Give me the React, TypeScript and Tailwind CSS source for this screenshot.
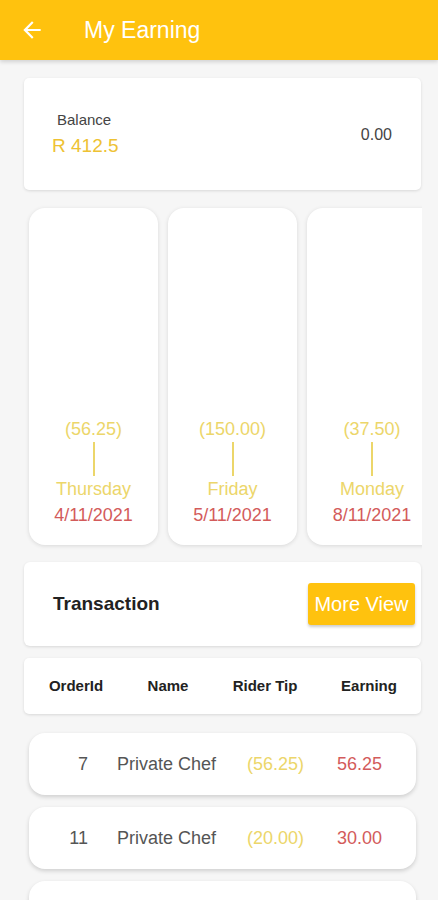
import React from "react";

const days = [
  { amt: "(56.25)", day: "Thursday", date: "4/11/2021" },
  { amt: "(150.00)", day: "Friday", date: "5/11/2021" },
  { amt: "(37.50)", day: "Monday", date: "8/11/2021" },
];

const rows = [
  { id: "7", name: "Private Chef", tip: "(56.25)", earn: "56.25" },
  { id: "11", name: "Private Chef", tip: "(20.00)", earn: "30.00" },
];

export default function App() {
  return (
    <div
      className="w-[438px] h-[900px] overflow-hidden bg-[#f6f6f6]"
      style={{ fontFamily: '"Liberation Sans", Arial, sans-serif' }}
    >
      <div className="h-[60px] bg-[#ffc20e] flex items-center shadow-[0_2px_4px_rgba(0,0,0,0.15)] relative z-10">
        <svg width="26" height="26" viewBox="0 0 24 24" className="ml-[19px]" fill="#ffffff">
          <path d="M20 11H7.83l5.59-5.59L12 4l-8 8 8 8 1.41-1.41L7.83 13H20v-2z" />
        </svg>
        <span className="ml-[39px] text-[23px] text-white leading-none">My Earning</span>
      </div>

      <div className="ml-[24px] mt-[18px] w-[397px] h-[112px] bg-white rounded-[5px] shadow-[0_1px_3px_rgba(0,0,0,0.12)] flex items-center justify-between pl-[28px] pr-[29px]">
        <div className="flex flex-col">
          <span className="text-[15px] text-[#444] leading-[20px] ml-[5px]">Balance</span>
          <span className="text-[19px] text-[#eec233] leading-[26px] mt-[3px]">R 412.5</span>
        </div>
        <span className="text-[16px] text-[#444] mt-[2px]">0.00</span>
      </div>

      <div className="ml-[24px] w-[398px] overflow-hidden">
        <div className="flex gap-[10px] pl-[5px] pt-[18px] pb-[17px]">
          {days.map((d, i) => (
            <div
              key={d.date}
              className={
                "shrink-0 w-[129px] h-[337px] bg-white rounded-[16px] shadow-[0_1px_4px_rgba(0,0,0,0.12)] flex flex-col items-center justify-end pb-[17px]" +
                (i === 2 ? " w-[130px]" : "")
              }
            >
              <span className="text-[18px] leading-[26px] text-[#ecd66a]">{d.amt}</span>
              <div className="w-[2px] h-[34px] bg-[#ecd66a]" />
              <span className="text-[18px] leading-[26px] text-[#ecd66a]">{d.day}</span>
              <span className="text-[18px] leading-[26px] text-[#d35b5b]">{d.date}</span>
            </div>
          ))}
        </div>
      </div>

      <div className="ml-[24px] w-[397px] h-[84px] bg-white rounded-[6px] shadow-[0_1px_3px_rgba(0,0,0,0.12)] flex items-center justify-between pl-[29px] pr-[6px]">
        <span className="text-[19px] font-bold text-[#222]">Transaction</span>
        <div className="w-[107px] h-[42px] bg-[#ffc20e] rounded-[3px] shadow-[0_2px_3px_rgba(0,0,0,0.2)] flex items-center justify-center">
          <span className="text-[20px] text-white">More View</span>
        </div>
      </div>

      <div className="ml-[24px] mt-[12px] w-[397px] h-[56px] bg-white rounded-[5px] shadow-[0_1px_3px_rgba(0,0,0,0.12)] grid grid-cols-[104px_80px_114px_94px] items-center text-[15px] font-bold text-[#222]">
        <span className="text-center">OrderId</span>
        <span className="text-center">Name</span>
        <span className="text-center">Rider Tip</span>
        <span className="text-center">Earning</span>
      </div>

      <div className="flex flex-col gap-[12px] mt-[19px]">
        {rows.map((r) => (
          <div
            key={r.id}
            className="ml-[29px] w-[387px] h-[62px] shrink-0 bg-white rounded-[16px] shadow-[0_2px_4px_rgba(0,0,0,0.16)] flex items-center text-[18px]"
          >
            <span className="w-[59px] text-right text-[#555]">{r.id}</span>
            <span className="ml-[29px] w-[130px] text-[#555]">{r.name}</span>
            <span className="w-[90px] text-[#ecd66a]">{r.tip}</span>
            <span className="text-[#d35b5b]">{r.earn}</span>
          </div>
        ))}
        <div className="ml-[29px] w-[387px] h-[62px] shrink-0 bg-white rounded-[16px] shadow-[0_2px_4px_rgba(0,0,0,0.16)]" />
      </div>
    </div>
  );
}
